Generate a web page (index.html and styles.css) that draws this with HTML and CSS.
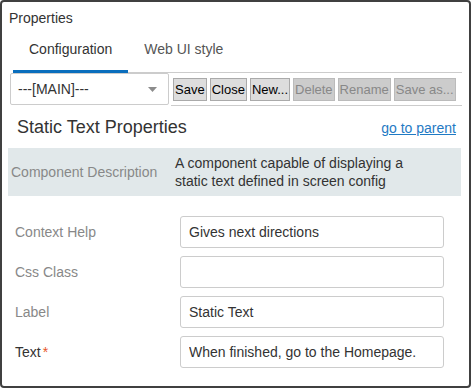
FILE: index.html
```html
<!DOCTYPE html>
<html lang="en">
<head>
<meta charset="utf-8">
<title>Properties</title>
<link rel="stylesheet" href="styles.css">
</head>
<body>
<div class="panel">
<div class="title">Properties</div>
<div class="tabs">
<div class="tab on">Configuration</div>
<div class="tab">Web UI style</div>
</div>
<div class="bar">
<div class="picker"><span>---[MAIN]---</span><svg width="9" height="5" viewBox="0 0 9 5"><path d="M0 0h9L4.5 5z" fill="#8c8c8c"/></svg></div>
<div class="acts">
<button>Save</button>
<button>Close</button>
<button>New...</button>
<button disabled>Delete</button>
<button disabled>Rename</button>
<button disabled>Save as...</button>
</div>
</div>
<div class="main">
<div class="head"><h2>Static Text Properties</h2><a href="#">go to parent</a></div>
<div class="desc">
<div class="dl">Component Description</div>
<div class="dt">A component capable of displaying a static text defined in screen config</div>
</div>
<div class="form">
<label>Context Help</label><input type="text" value="Gives next directions">
<label>Css Class</label><input type="text" value="">
<label>Label</label><input type="text" value="Static Text">
<label class="req">Text<em>*</em></label><input type="text" value="When finished, go to the Homepage.">
</div>
</div>
</div>
</body>
</html>
```
FILE: styles.css
```css
*{box-sizing:border-box;margin:0;padding:0;font-family:"Liberation Sans",Arial,sans-serif;}
body{background:#fff;color:#333;}
.panel{width:471px;height:388px;border:2px solid #404040;border-radius:4px;}
.title{font-size:14px;line-height:20px;padding:6px 7px 0;}
.tabs{display:flex;margin:0 7px 0 11px;border-bottom:1px solid #ccc;height:45px;}
.tab{font-size:14px;line-height:42px;padding:0 16px;border-bottom:3px solid transparent;margin-bottom:-1px;color:#555;}
.tab.on{border-bottom-color:#0a6ebd;color:#333;}
.bar{display:flex;margin:0 7px 0 8px;}
.picker{width:159px;height:32px;border:1px solid #ccc;border-radius:2px;display:flex;align-items:center;justify-content:space-between;padding:0 11px 0 7px;font-size:14px;}
.acts{flex:1;margin-left:2px;height:33px;border-bottom:1px solid #ccc;display:flex;align-items:center;gap:3px;padding-left:2px;}
button{font-size:13px;height:23px;padding:0 1px;background:#ddd;border:1px solid #aaa;color:#000;}
button[disabled]{background:#ccc;border-color:#bbb;color:#888;}
.main{padding:0 8px 0 6px;}
.head{display:flex;justify-content:space-between;align-items:baseline;padding:0 5px 0 9px;height:41px;margin-top:1px;}
h2{font-size:18px;font-weight:normal;line-height:41px;}
a{font-size:14px;color:#1f7ac4;}
.desc{display:grid;grid-template-columns:167px 1fr;align-items:center;background:#e1e8ea;padding:6px 0;font-size:14px;line-height:18px;}
.dl{color:#888;padding-left:3px;}
.dt{padding-right:40px;}
.form{display:grid;grid-template-columns:172px 264px;row-gap:8px;margin-top:20px;align-items:center;}
label{font-size:14px;color:#888;padding-left:7px;}
label.req{color:#333;}
label em{font-style:normal;color:#e8562a;padding-left:2px;}
input{height:32px;border:1px solid #ccc;border-radius:3px;padding:0 8px;font-size:14px;color:#333;}
```
